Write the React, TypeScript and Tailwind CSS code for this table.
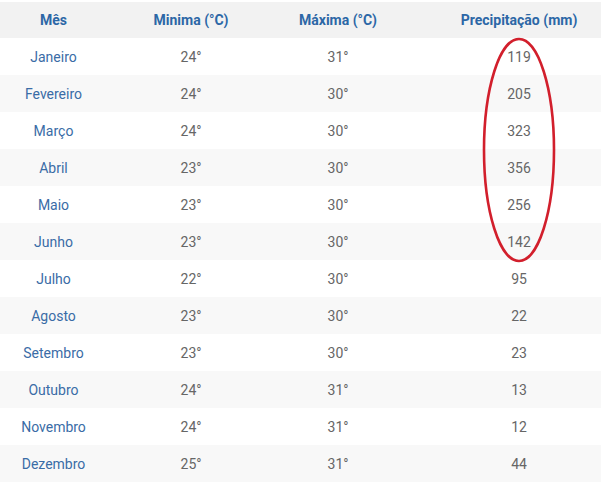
import React from 'react';

const rows: [string, string, string, string][] = [
  ['Janeiro', '24°', '31°', '119'],
  ['Fevereiro', '24°', '30°', '205'],
  ['Março', '24°', '30°', '323'],
  ['Abril', '23°', '30°', '356'],
  ['Maio', '23°', '30°', '256'],
  ['Junho', '23°', '30°', '142'],
  ['Julho', '22°', '30°', '95'],
  ['Agosto', '23°', '30°', '22'],
  ['Setembro', '23°', '30°', '23'],
  ['Outubro', '24°', '31°', '13'],
  ['Novembro', '24°', '31°', '12'],
  ['Dezembro', '25°', '31°', '44'],
];

const cols = 'grid grid-cols-[107px_168px_126px_236px] w-[637px]';

export default function App() {
  return (
    <div className="relative w-[601px] h-[491px] overflow-hidden bg-white pt-[2px] font-['Roboto',sans-serif] text-[14px]">
      <div className={`${cols} h-[36px] items-center bg-[#f2f2f2] font-bold text-[#2c67a6]`}>
        <div className="text-center">Mês</div>
        <div className="text-center">Minima (°C)</div>
        <div className="text-center">Máxima (°C)</div>
        <div className="text-center">Precipitação (mm)</div>
      </div>
      {rows.map((r, i) => (
        <div
          key={r[0]}
          className={`${cols} h-[37px] items-center pt-px ${i % 2 === 1 ? 'bg-[#f8f8f8]' : 'bg-white'}`}
        >
          <div className="text-center text-[#3a6ca6]">{r[0]}</div>
          <div className="text-center text-[#666]">{r[1]}</div>
          <div className="text-center text-[#666]">{r[2]}</div>
          <div className="text-center text-[#666]">{r[3]}</div>
        </div>
      ))}

      {/* hand-drawn highlight */}
      <svg className="absolute left-[481px] top-[36px] pointer-events-none" width="76" height="228" viewBox="0 0 76 228">
        <ellipse cx="38" cy="114" rx="35" ry="111" fill="none" stroke="#d21f2c" strokeWidth="2.6" />
      </svg>
    </div>
  );
}
